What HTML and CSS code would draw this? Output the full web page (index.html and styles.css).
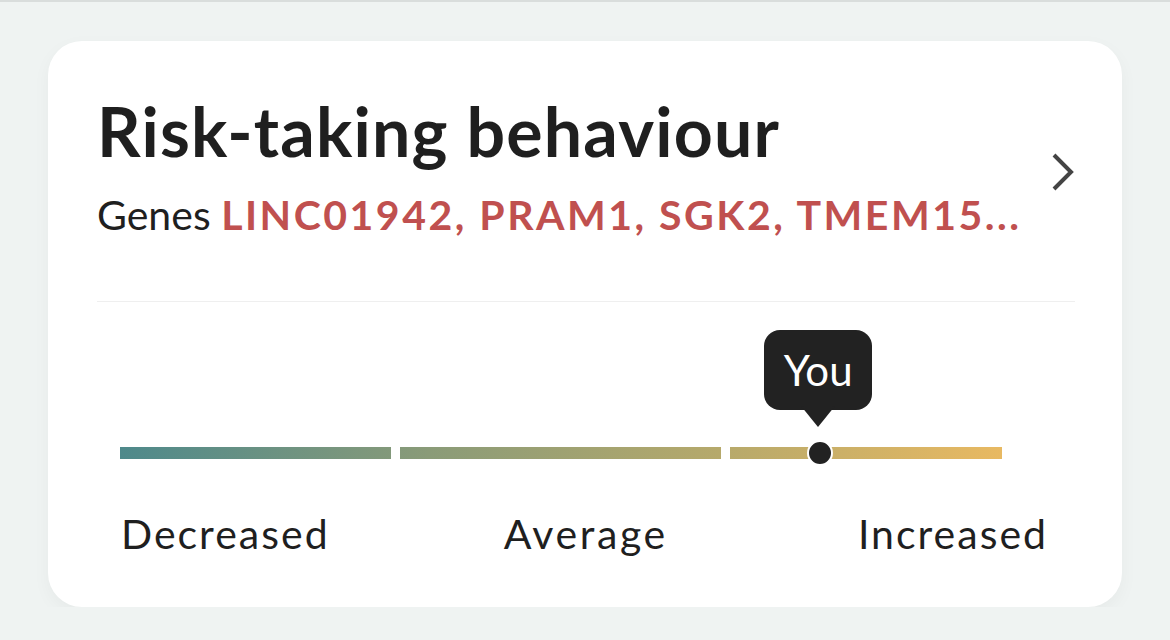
FILE: index.html
```html
<!DOCTYPE html>
<html lang="en">
<head>
    <meta charset="UTF-8">
    <meta name="viewport" content="width=device-width, initial-scale=1.0">
    <title>Risk-taking behaviour</title>
    <link rel="stylesheet" href="styles.css">
</head>
<body>
    <div class="top-edge"></div>

    <div class="card">
        <div class="card-header">
            <div class="card-titles">
                <h1 class="trait-title">Risk-taking behaviour</h1>
                <p class="genes">Genes <span class="gene-list">LINC01942, PRAM1, SGK2, TMEM15...</span></p>
            </div>
            <svg class="chevron" width="24" height="40" viewBox="0 0 24 40" aria-hidden="true">
                <path d="M3 3 L20 20 L3 37" fill="none" stroke="#444" stroke-width="4" stroke-linecap="butt" stroke-linejoin="miter"/>
            </svg>
        </div>

        <hr class="divider">

        <div class="scale">
            <div class="bar">
                <div class="seg seg-low"></div>
                <div class="seg seg-mid"></div>
                <div class="seg seg-high"></div>

                <!-- user position on the scale -->
                <div class="marker" style="left: 79.2%;">
                    <div class="tooltip">You</div>
                    <div class="dot"></div>
                </div>
            </div>

            <div class="scale-labels">
                <span>Decreased</span>
                <span class="label-mid">Average</span>
                <span>Increased</span>
            </div>
        </div>
    </div>
</body>
</html>
```

FILE: styles.css
```css
body {
    margin: 0;
    background-color: #eff3f2;
    font-family: 'Lato', 'Noto Sans', sans-serif;
    color: #1f1f1f;
}

.top-edge {
    height: 2px;
    background-color: #d9dddc;
    box-shadow: 0 6px 22px rgba(0, 0, 0, 0.05);
}

.card {
    margin: 39px 0 0 48px;
    width: 1074px;
    box-sizing: border-box;
    background-color: #fff;
    border-radius: 34px;
    padding: 50px 47px 48px 49px;
    box-shadow: 0 6px 18px rgba(0, 0, 0, 0.04);
}

.card-header {
    display: flex;
    align-items: center;
    justify-content: space-between;
}

.trait-title {
    margin: 0;
    font-size: 68px;
    line-height: 80px;
    font-weight: 700;
    letter-spacing: 1.2px;
    color: #1f1f1f;
}

.genes {
    margin: 20px 0 0;
    font-size: 41px;
    line-height: 48px;
    color: #1f1f1f;
    white-space: nowrap;
}

.gene-list {
    color: #c0504f;
    font-weight: 700;
    letter-spacing: 2.5px;
}

.chevron {
    display: block;
    margin-top: 14px;
}

.divider {
    margin: 62px 0 0;
    border: 0;
    border-top: 1px solid #efefef;
}

/* gradient scale */
.bar {
    position: relative;
    display: flex;
    gap: 9px;
    height: 12px;
    margin: 145px 71px 0 23px;
}

.seg {
    height: 100%;
    background-image: linear-gradient(90deg, #4e898b 0%, #8a9b78 35%, #b6a96b 68%, #e8b962 100%);
    background-size: 882px 100%;
    background-repeat: no-repeat;
}

.seg-low {
    width: 271px;
    background-position: 0 0;
}

.seg-mid {
    width: 321px;
    background-position: -280px 0;
}

.seg-high {
    width: 272px;
    background-position: -610px 0;
}

.marker {
    position: absolute;
    top: 6px;
    width: 0;
    height: 0;
}

.dot {
    position: absolute;
    left: -13px;
    top: -13px;
    width: 22px;
    height: 22px;
    border-radius: 50%;
    background-color: #222;
    border: 2px solid #fff;
}

.tooltip {
    position: absolute;
    left: -56px;
    top: -123px;
    width: 108px;
    height: 80px;
    border-radius: 16px;
    background-color: #222;
    color: #fff;
    font-size: 42px;
    line-height: 80px;
    text-align: center;
}

.tooltip::after {
    content: "";
    position: absolute;
    left: 37px;
    top: 76px;
    width: 0;
    height: 0;
    border-left: 17px solid transparent;
    border-right: 17px solid transparent;
    border-top: 21px solid #222;
    border-radius: 3px;
}

.scale-labels {
    display: flex;
    justify-content: space-between;
    margin: 50px 27px 0 24px;
    font-size: 41px;
    line-height: 50px;
    letter-spacing: 2px;
    color: #1f1f1f;
}

.label-mid {
    margin-right: 16px;
    letter-spacing: 2.6px;
}
```
